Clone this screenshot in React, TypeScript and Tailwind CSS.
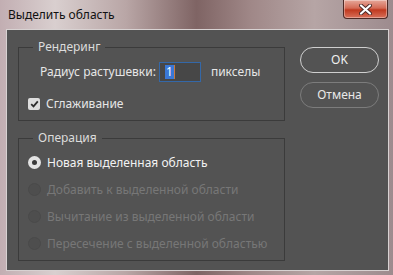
const font = "font-['Noto_Sans',sans-serif]";

function Radio({ label, checked, disabled }: { label: string; checked?: boolean; disabled?: boolean }) {
  return (
    <div className="flex h-[27px] items-center pl-[9px]">
      {checked ? (
        <span className="flex h-[13px] w-[13px] items-center justify-center rounded-full bg-[#e4e4e4]">
          <span className="h-[5px] w-[5px] rounded-full bg-[#3a3a3a]" />
        </span>
      ) : (
        <span className="h-[13px] w-[13px] rounded-full border border-[#4a4a4a] bg-[#4e4e4e]" />
      )}
      <span className={`ml-[6px] text-[12px] ${disabled ? "text-[#777777]" : "text-[#f2f2f2]"}`}>{label}</span>
    </div>
  );
}

export default function App() {
  return (
    <div
      className={`${font} h-[275px] w-[393px] overflow-hidden bg-[linear-gradient(to_right,#c2aeb2_0%,#d9cfcf_14%,#b9a6a6_32%,#7f6464_50%,#a08888_64%,#b6a5a5_80%,#9d8b8e_100%)]`}
    >
      {/* title bar */}
      <div className="flex h-[29px] items-start justify-between">
        <div className="pl-[8px] pt-[7px] text-[12px] leading-[16px] text-[#111]">Выделить область</div>
        <button className="mr-[5px] flex h-[19px] w-[45px] items-center justify-center rounded-b-[4px] border border-t-0 border-[#4d2a26] bg-[linear-gradient(to_bottom,#e6a89a_0%,#d46a55_45%,#c0391f_55%,#d8705a_100%)] shadow-[inset_0_0_0_1px_rgba(255,255,255,0.35)]">
          <svg width="13" height="11" viewBox="0 0 13 11">
            <path d="M2 1.5 L11 9.5 M11 1.5 L2 9.5" stroke="#4a2a28" strokeWidth="4" strokeLinecap="round" />
            <path d="M2 1.5 L11 9.5 M11 1.5 L2 9.5" stroke="#ffffff" strokeWidth="2.2" strokeLinecap="round" />
          </svg>
        </button>
      </div>

      {/* dialog body */}
      <div className="ml-[6px] mr-[4px] flex h-[242px] items-start border border-[#d8d2d2] bg-[#535353] pl-[11px] pt-[9px]">
        <div className="flex w-[267px] flex-col gap-[9px]">
          <fieldset className="h-[82px] border border-[#3b3b3b]">
            <legend className="ml-[14px] px-[5px] text-[12px] leading-[16px] text-[#dcdcdc]">Рендеринг</legend>
            <div className="mt-[7px] flex h-[20px] items-center pl-[21px] text-[12px] text-[#e6e6e6]">
              <span>Радиус растушевки:</span>
              <div className="ml-[3px] flex h-[20px] w-[42px] items-center border border-[#3468a8] bg-[#474747] pl-[5px]">
                <span className="bg-[#3a78d6] px-[1px] leading-[14px] text-white">1</span>
                <span className="h-[14px] w-[1px] bg-[#c77a3e]" />
              </div>
              <span className="ml-[10px]">пикселы</span>
            </div>
            <div className="mt-[13px] flex items-center pl-[9px]">
              <span className="flex h-[12px] w-[12px] items-center justify-center rounded-[2px] bg-[#dedede]">
                <svg width="9" height="8" viewBox="0 0 9 8">
                  <path d="M1.2 4.2 L3.5 6.4 L7.8 1.4" fill="none" stroke="#2e2e2e" strokeWidth="1.8" />
                </svg>
              </span>
              <span className="ml-[6px] text-[12px] text-[#e6e6e6]">Сглаживание</span>
            </div>
          </fieldset>

          <fieldset className="h-[131px] border border-[#3b3b3b]">
            <legend className="ml-[14px] px-[5px] text-[12px] leading-[16px] text-[#dcdcdc]">Операция</legend>
            <div className="mt-[3px] flex flex-col">
              <Radio label="Новая выделенная область" checked />
              <Radio label="Добавить к выделенной области" disabled />
              <Radio label="Вычитание из выделенной области" disabled />
              <Radio label="Пересечение с выделенной областью" disabled />
            </div>
          </fieldset>
        </div>

        <div className="ml-[15px] mt-[8px] flex w-[79px] flex-col gap-[9px]">
          <button className="h-[26px] rounded-full border-[1.5px] border-[#cfcfcf] text-[12px] text-[#f0f0f0]">OK</button>
          <button className="h-[26px] rounded-full border-[1.5px] border-[#7c7c7c] text-[12px] text-[#e8e8e8]">Отмена</button>
        </div>
      </div>
    </div>
  );
}
